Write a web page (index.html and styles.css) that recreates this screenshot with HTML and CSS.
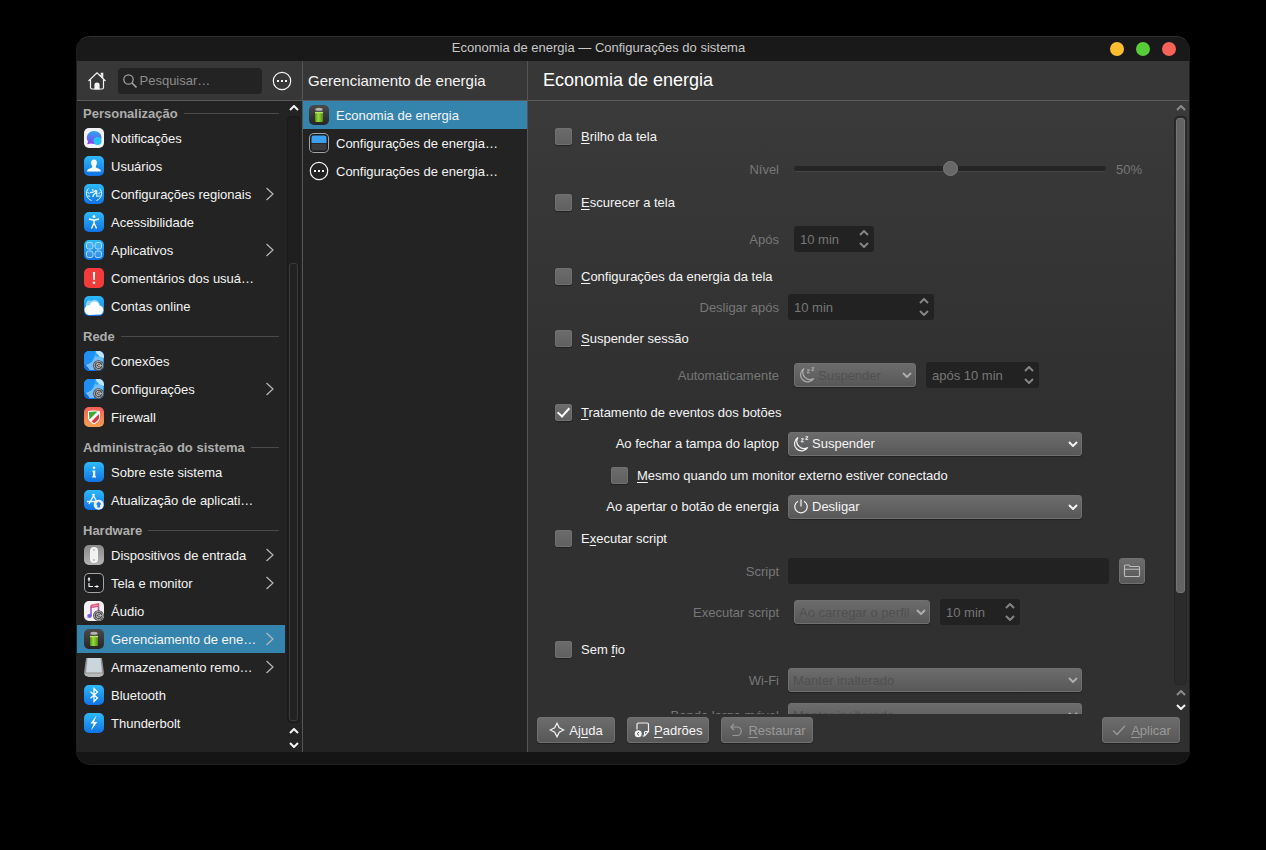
FILE: index.html
```html
<!DOCTYPE html>
<html lang="pt-BR">
<head>
  <meta charset="UTF-8">
  <meta name="viewport" content="width=device-width, initial-scale=1.0">
  <title>Economia de energia — Configurações do sistema</title>
  <link rel="stylesheet" href="styles.css">
</head>
<body>
  <svg class="defs" width="0" height="0">
    <defs>
      <linearGradient id="chat" x1="0" y1="0" x2="0" y2="1"><stop offset="0" stop-color="#2ba6f5"/><stop offset="1" stop-color="#8a3cf0"/></linearGradient>
      <linearGradient id="note" x1="0" y1="0" x2="0" y2="1"><stop offset="0" stop-color="#f0566c"/><stop offset="1" stop-color="#6e58ee"/></linearGradient>
      <linearGradient id="cell" x1="0" y1="0" x2="1" y2="0"><stop offset="0" stop-color="#4e8d14"/><stop offset=".4" stop-color="#9bdc3c"/><stop offset="1" stop-color="#4f8f16"/></linearGradient>
    </defs>
    <symbol id="chevron" viewBox="0 0 10 16"><path d="M1.500 2 8 8l-6.500 6" fill="none" stroke="currentColor" stroke-width="1.200"/></symbol>
    <symbol id="up" viewBox="0 0 10 6"><path d="M1 5l4-4 4 4" fill="none" stroke="currentColor" stroke-width="2"/></symbol>
    <symbol id="down" viewBox="0 0 10 6"><path d="M1 1l4 4 4-4" fill="none" stroke="currentColor" stroke-width="2"/></symbol>
    <symbol id="more" viewBox="0 0 20 20">
      <circle cx="10" cy="10" r="8.700" fill="none" stroke="currentColor" stroke-width="1.200"/>
      <path d="M5 9h2v2H5zM9 9h2v2H9zM13 9h2v2h-2z" fill="currentColor"/>
    </symbol>
    <symbol id="gear" viewBox="0 0 12 12">
      <circle cx="6" cy="6" r="5.800" fill="#444"/>
      <circle cx="6" cy="6" r="4.500" fill="none" stroke="#c4c4c4" stroke-width=".9"/>
      <circle cx="6" cy="6" r="2.300" fill="none" stroke="#d0d0d0" stroke-width=".9"/>
      <path d="M6 6h4M6 6 4 2.500M6 6 4 9.500" stroke="#ccc" stroke-width=".8"/>
    </symbol>
    <symbol id="battery" viewBox="0 0 20 20">
      <path d="M6 5h8v11a1 1 0 0 1-1 1H7a1 1 0 0 1-1-1z" fill="url(#cell)"/>
      <path d="M6 4.500c0-2.500 8-2.500 8 0v3H6z" fill="#50524c"/>
      <ellipse cx="10" cy="4.200" rx="3.600" ry="1.500" fill="#b4b5b0"/>
      <path d="M6 7h8v1.300H6z" fill="#b8e86a"/>
    </symbol>
    <symbol id="globe" viewBox="0 0 20 20">
      <path d="M0 13C6 13 9 8 10 4c1 0 2-2 1-4H5a5 5 0 0 0-5 5z" fill="#1f8ff5"/>
      <path d="M1 14c6-1 9-5 10-9l3 1 2-4 3 2v7l-5 2-4 6H4z" fill="#76bdfb"/>
      <path d="M12 0c0 3 2 3 3 5l5 2V5a5 5 0 0 0-5-5z" fill="#c2e2ff"/>
      <path d="M0 13c3 2 5 4 6 7H5a5 5 0 0 1-5-5z" fill="#136de0"/>
      <use href="#gear" x="9" y="9" width="11" height="11"/>
    </symbol>
    <symbol id="sleep" viewBox="0 0 16 16">
      <path d="M5 1.500A7.200 7.200 0 1 0 14.800 11.500 7.200 7.200 0 0 1 5 1.500z" fill="none" stroke="currentColor" stroke-width="1.200"/>
      <path d="M8 2.800h2.500L8 5.800h2.700M12.500 .8H15l-2.500 2.500h2.700" fill="none" stroke="currentColor" stroke-width="1"/>
    </symbol>
  </svg>

  <div class="window">
    <header class="titlebar">
      <h1>Economia de energia — Configurações do sistema</h1>
      <div class="window-buttons">
        <button class="minimize" aria-label="Minimizar"></button>
        <button class="maximize" aria-label="Maximizar"></button>
        <button class="close" aria-label="Fechar"></button>
      </div>
    </header>

    <div class="content">
      <aside class="sidebar">
        <div class="toolbar">
          <button class="tool" aria-label="Início">
            <svg viewBox="0 0 20 20" width="20" height="20" fill="none" stroke="currentColor" stroke-width="1.200"><path d="M1.500 10 10 1.800 18.500 10M3.500 8.500v8a1.500 1.500 0 0 0 1.500 1.500h10a1.500 1.500 0 0 0 1.500-1.500v-8M14.300 5.500V2.300h1.400V7"/><path d="M8 18v-4.500c0-2 4-2 4 0V18z" fill="currentColor"/></svg>
          </button>
          <label class="search">
            <svg viewBox="0 0 14 14" width="14" height="14" fill="none" stroke="currentColor" stroke-width="1.200"><circle cx="5.500" cy="5.500" r="4.700"/><path d="m9 9 4.500 4.500" stroke-width="1.600"/></svg>
            <input type="text" placeholder="Pesquisar…" aria-label="Pesquisar">
          </label>
          <button class="tool" aria-label="Mais"><svg width="20" height="20"><use href="#more"/></svg></button>
        </div>

        <div class="scroll">
          <nav class="list">
            <h2>Personalização</h2>
            <a href="#"><svg class="icon white" viewBox="0 0 20 20"><path d="M10 3c4.800 0 7.500 3 7.500 6.500s-2.700 6.500-7.500 6.500c-1 0-2-.2-3-.5L3.200 16.300l.8-2.800C1 9 4 3 10 3z" fill="url(#chat)"/><circle cx="13.500" cy="13" r="4" fill="#22c4f4"/></svg>Notificações</a>
            <a href="#"><svg class="icon blue" viewBox="0 0 20 20" fill="#fff"><path d="M10 3.500c3.500 0 3.500 4.500 1.800 6.500v1.500c2 1 4.700 1 5.200 4H3c.5-3 3.200-3 5.200-4V10C6.500 8 6.500 3.500 10 3.500z"/></svg>Usuários</a>
            <a href="#"><svg class="icon blue" viewBox="0 0 20 20" fill="none" stroke="#e6f6ff" stroke-width="1"><path d="M4.500 4.500C1 8 2 14.500 7.500 16.500M15.500 4.500c3.500 3.500 2.500 10-3 12M3.500 8.500l2 1M3.500 12l2.500.2M16.500 8.500l-2 1M16.500 12l-2.500.2"/><path d="M6 8.500c1.500-.5 2 .5 3.500-.5l2-1.500.8 2L10 10.500 8.500 13M12.500 6l.5 7M8 6.500l1.500-1" stroke-width="1.300"/></svg>Configurações regionais<svg class="chevron"><use href="#chevron"/></svg></a>
            <a href="#"><svg class="icon blue" viewBox="0 0 20 20" fill="none" stroke="#fff" stroke-width="1.400"><circle cx="10" cy="4.700" r="1.400" fill="#fff" stroke="none"/><path d="m5 7 4 1h2l4-1M10 8v4M10 11l-2.500 5.500M10 11l2.500 5.500"/></svg>Acessibilidade</a>
            <a href="#"><svg class="icon blue" viewBox="0 0 20 20" fill="#ffffff22" stroke="#b9e2ff" stroke-width=".9"><rect x="2.500" y="2.500" width="6.500" height="6.500" rx="2"/><rect x="11" y="2.500" width="6.500" height="6.500" rx="2"/><rect x="2.500" y="11" width="6.500" height="6.500" rx="2"/><rect x="11" y="11" width="6.500" height="6.500" rx="2"/></svg>Aplicativos<svg class="chevron"><use href="#chevron"/></svg></a>
            <a href="#"><svg class="icon red" viewBox="0 0 20 20" fill="#fff"><path d="M8.900 4h2.200l-.3 8H9.200z"/><circle cx="10" cy="14.700" r="1.300"/></svg>Comentários dos usuá…</a>
            <a href="#"><svg class="icon blue" viewBox="0 0 20 20"><path d="M2 12C1 6 4 3.500 7 5c5-3 8 0 9 4z" fill="#8ad3fa"/><path d="M5 19a5 5 0 0 1-3-8.500c1-1 2-1.500 3.500-1C7 4 14 4 15.500 9.500c4 0 5.500 6 1.500 9z" fill="#fff"/></svg>Contas online</a>

            <h2>Rede</h2>
            <a href="#"><svg class="icon blue" viewBox="0 0 20 20"><use href="#globe"/></svg>Conexões</a>
            <a href="#"><svg class="icon blue" viewBox="0 0 20 20"><use href="#globe"/></svg>Configurações<svg class="chevron"><use href="#chevron"/></svg></a>
            <a href="#"><svg class="icon orange" viewBox="0 0 20 20"><path d="M4 4q6-1 12 0v6c0 3.500-3 6-6 7.300C7 16 4 13.500 4 10z" fill="#fff"/><path d="M5 5q4-.7 8.500-.4L5.500 12.500C5 10 5 7 5 5z" fill="#3fa63b"/><path d="M15 7v3c0 2.700-2.700 5-5 6.200L7.500 14.500z" fill="#d8343f"/></svg>Firewall</a>

            <h2>Administração do sistema</h2>
            <a href="#"><svg class="icon blue" viewBox="0 0 20 20" fill="#fff"><circle cx="10" cy="5.700" r="1.300"/><path d="M8.500 8.500h2.700v5.700h.8v1.200H8.200v-1.200H9V9.700h-.5z"/></svg>Sobre este sistema</a>
            <a href="#"><svg class="icon blue" viewBox="0 0 20 20" fill="none" stroke="#e8f4ff" stroke-width="1.500"><path d="M10.500 4 5 14M8.500 4l4.500 8M3 11.500h9"/><circle cx="14.700" cy="14.700" r="5" fill="#eef4fb" stroke="none"/><path d="m14.700 11.500 3 3h-1.600v3h-2.800v-3h-1.600z" fill="#1a82ea" stroke="none"/></svg>Atualização de aplicati…</a>

            <h2>Hardware</h2>
            <a href="#"><svg class="icon gray" viewBox="0 0 20 20"><rect x="6" y="2" width="8" height="16" rx="4" fill="#f2f2f2"/><path d="M10 4v2M10 14v2" stroke="#999"/></svg>Dispositivos de entrada<svg class="chevron"><use href="#chevron"/></svg></a>
            <a href="#"><svg class="icon dark" viewBox="0 0 20 20" fill="none" stroke="#fff" stroke-width="1.100"><path d="M5 5.500v3M5 10v3.500h4M10.500 13.500h3"/><path d="m3.500 6.500 1.500-2.500 1.500 2.500zM12.500 12l2.500 1.500-2.500 1.500z" fill="#fff" stroke="none"/></svg>Tela e monitor<svg class="chevron"><use href="#chevron"/></svg></a>
            <a href="#"><svg class="icon white" viewBox="0 0 20 20"><path d="M7 4.500 14.500 3v10.500M7 4.500V15M7 6.500l7.500-1.500" fill="none" stroke="url(#note)" stroke-width="1.600"/><ellipse cx="5.500" cy="15" rx="2.300" ry="1.900" fill="#7b58e8"/><use href="#gear" x="9" y="9" width="11" height="11"/></svg>Áudio</a>
            <a href="#" class="selected"><svg class="icon charcoal"><use href="#battery"/></svg>Gerenciamento de ene…<svg class="chevron"><use href="#chevron"/></svg></a>
            <a href="#"><svg class="icon" viewBox="0 0 20 20"><path d="M2 1h16l2 15v3H0v-3z" fill="#8e9093"/><path d="M3.500 1h13L18 15.500H2z" fill="#cbd5dc"/><path d="M0 16.500h20V20H0z" fill="#b9bbb8"/></svg>Armazenamento remo…<svg class="chevron"><use href="#chevron"/></svg></a>
            <a href="#"><svg class="icon blue" viewBox="0 0 20 20" fill="none" stroke="#fff" stroke-width="1.300"><path d="m6.500 6.800 7 6.200-3.500 3.500v-13L13.500 7l-7 6.200"/></svg>Bluetooth</a>
            <a href="#"><svg class="icon blue" viewBox="0 0 20 20" fill="#fff"><path d="m12.500 2.500-6 8h3.200L7 17.500l6.300-8.500h-3.200z"/></svg>Thunderbolt</a>
          </nav>
          <div class="scrollbar idle">
            <svg class="arrow"><use href="#up"/></svg>
            <div class="groove"><div class="handle"></div></div>
            <svg class="arrow"><use href="#up"/></svg>
            <svg class="arrow"><use href="#down"/></svg>
          </div>
        </div>
      </aside>

      <section class="modules">
        <div class="toolbar"><h2>Gerenciamento de energia</h2></div>
        <nav class="list">
          <a href="#" class="selected"><svg class="icon charcoal"><use href="#battery"/></svg>Economia de energia</a>
          <a href="#"><svg class="icon dark" viewBox="0 0 20 20"><path d="M2.500 10V4.500a2 2 0 0 1 2-2h11a2 2 0 0 1 2 2V10z" fill="#3ba0f0"/><path d="M2.500 10.500h15V16a1.500 1.500 0 0 1-1.500 1.500H4A1.500 1.500 0 0 1 2.500 16z" fill="#3a3b3d"/></svg>Configurações de energia…</a>
          <a href="#"><svg class="icon"><use href="#more"/></svg>Configurações de energia…</a>
        </nav>
      </section>

      <main class="panel">
        <div class="toolbar"><h2>Economia de energia</h2></div>
        <div class="scroll">
          <form class="settings">
            <label class="group"><input type="checkbox"><span><u>B</u>rilho da tela</span></label>
            <div class="row disabled">
              <label for="level">Nível</label>
              <div class="field inset"><input type="range" id="level" value="50" disabled><output for="level">50%</output></div>
            </div>

            <label class="group"><input type="checkbox"><span><u>E</u>scurecer a tela</span></label>
            <div class="row tall disabled">
              <label for="dim">Após</label>
              <div class="field inset">
                <span class="spin"><input type="text" id="dim" value="10 min" disabled><span class="steps"><svg><use href="#up"/></svg><svg><use href="#down"/></svg></span></span>
              </div>
            </div>

            <label class="group"><input type="checkbox"><span><u>C</u>onfigurações da energia da tela</span></label>
            <div class="row short disabled">
              <label for="off">Desligar após</label>
              <div class="field">
                <span class="spin wide"><input type="text" id="off" value="10 min" disabled><span class="steps"><svg><use href="#up"/></svg><svg><use href="#down"/></svg></span></span>
              </div>
            </div>

            <label class="group"><input type="checkbox"><span><u>S</u>uspender sessão</span></label>
            <div class="row tall disabled">
              <label for="auto">Automaticamente</label>
              <div class="field inset">
                <span class="combo small with-icon"><svg class="glyph"><use href="#sleep"/></svg><select id="auto" disabled><option>Suspender</option></select><svg class="caret"><use href="#down"/></svg></span>
                <span class="spin medium"><input type="text" value="após 10 min" aria-label="Tempo" disabled><span class="steps"><svg><use href="#up"/></svg><svg><use href="#down"/></svg></span></span>
              </div>
            </div>

            <label class="group"><input type="checkbox" checked><span><u>T</u>ratamento de eventos dos botões</span></label>
            <div class="row short">
              <label for="lid">Ao fechar a tampa do laptop</label>
              <div class="field">
                <span class="combo with-icon"><svg class="glyph"><use href="#sleep"/></svg><select id="lid"><option>Suspender</option></select><svg class="caret"><use href="#down"/></svg></span>
              </div>
            </div>
            <label class="group nested"><input type="checkbox"><span><u>M</u>esmo quando um monitor externo estiver conectado</span></label>
            <div class="row short">
              <label for="power">Ao apertar o botão de energia</label>
              <div class="field">
                <span class="combo with-icon"><svg class="glyph" viewBox="0 0 16 16" fill="none" stroke="currentColor" stroke-width="1.200"><path d="M5 2.200a6.200 6.200 0 1 0 6 0M8 .5v7"/></svg><select id="power"><option>Desligar</option></select><svg class="caret"><use href="#down"/></svg></span>
              </div>
            </div>

            <label class="group"><input type="checkbox"><span>E<u>x</u>ecutar script</span></label>
            <div class="row disabled">
              <label for="script">Script</label>
              <div class="field">
                <input type="text" id="script" class="path" disabled>
                <button type="button" class="browse" aria-label="Abrir arquivo" disabled><svg viewBox="0 0 18 16" width="18" height="16" fill="none" stroke="currentColor" stroke-width="1.100"><path d="M1.500 3a1 1 0 0 1 1-1h3.500l1 1.500h8.500a1 1 0 0 1 1 1v8a1 1 0 0 1-1 1h-13a1 1 0 0 1-1-1zM1.500 6.200h15"/></svg></button>
              </div>
            </div>
            <div class="row last disabled">
              <label for="when">Executar script</label>
              <div class="field inset">
                <span class="combo event"><select id="when" disabled><option>Ao carregar o perfil</option></select><svg class="caret"><use href="#down"/></svg></span>
                <span class="spin"><input type="text" value="10 min" aria-label="Tempo" disabled><span class="steps"><svg><use href="#up"/></svg><svg><use href="#down"/></svg></span></span>
              </div>
            </div>

            <label class="group"><input type="checkbox"><span>Sem <u>f</u>io</span></label>
            <div class="row short disabled">
              <label for="wifi">Wi-Fi</label>
              <div class="field"><span class="combo"><select id="wifi" disabled><option>Manter inalterado</option></select><svg class="caret"><use href="#down"/></svg></span></div>
            </div>
            <div class="row dense disabled">
              <label for="mobile">Banda larga móvel</label>
              <div class="field"><span class="combo"><select id="mobile" disabled><option>Manter inalterado</option></select><svg class="caret"><use href="#down"/></svg></span></div>
            </div>
          </form>
          <div class="scrollbar">
            <svg class="arrow dim"><use href="#up"/></svg>
            <div class="groove"><div class="handle"></div></div>
            <svg class="arrow dim"><use href="#up"/></svg>
            <svg class="arrow"><use href="#down"/></svg>
          </div>
        </div>
        <footer class="actions">
          <button><svg viewBox="0 0 16 16" fill="none" stroke="currentColor" stroke-width="1.200"><path d="M8 1.200 10.300 5.700 14.800 8l-4.500 2.300L8 14.800l-2.300-4.500L1.200 8l4.500-2.300z"/></svg><span>Aj<u>u</u>da</span></button>
          <button><svg viewBox="0 0 16 16" fill="none" stroke="currentColor" stroke-width="1.200"><path d="M3 7.500V2.500A1.500 1.500 0 0 1 4.500 1h8.500A1.500 1.500 0 0 1 14.500 2.500v7L10.500 14H8.500M14.500 9.500h-3a1 1 0 0 0-1 1V14"/><circle cx="4.200" cy="11.800" r="3.500" fill="currentColor" stroke="none"/><path d="m5 10-1.800 1.800L5 13.500" stroke="#555" stroke-width="1"/></svg><span><u>P</u>adrões</span></button>
          <button disabled><svg viewBox="0 0 16 16" fill="none" stroke="currentColor" stroke-width="1.200"><path d="M6 2 3 5l3 3M3 5h6a4.200 4.200 0 0 1 0 8.500H4.500"/></svg><span><u>R</u>estaurar</span></button>
          <button class="apply" disabled><svg viewBox="0 0 16 16" fill="none" stroke="currentColor" stroke-width="1.300"><path d="m2 8.500 4 4L14 3.800"/></svg><span><u>A</u>plicar</span></button>
        </footer>
      </main>
    </div>
  </div>
</body>
</html>
```
FILE: styles.css
```css
* {
  box-sizing: border-box;
}
body {
  margin: 0;
  padding: 36px 76px 85px;
  height: 100vh;
  display: flex;
  background: #000;
  color: #f4f4f4;
  font-family: "Liberation Sans", Arial, sans-serif;
  font-size: 13px;
  overflow: hidden;
}
.defs {
  position: absolute;
}
h1, h2 {
  margin: 0;
  font-weight: normal;
}
svg {
  flex: none;
}
button, input, select {
  margin: 0;
  font: inherit;
  color: inherit;
}
a {
  color: inherit;
  text-decoration: none;
}
u {
  text-underline-offset: 2px;
  text-decoration-thickness: 1px;
  text-decoration-skip-ink: none;
}

/* Window frame */
.window {
  flex: 1;
  display: flex;
  flex-direction: column;
  min-width: 0;
  padding-bottom: 12px;
  background: #151515;
  border: 1px solid #1e1e1e;
  border-top-color: #303030;
  border-radius: 14px;
  overflow: hidden;
}
.titlebar {
  display: flex;
  align-items: center;
  height: 24px;
  padding: 0 13px 0 10px;
  background: #191919;
  color: #c8c8c8;
}
.titlebar h1 {
  flex: 1;
  padding-bottom: 3px;
  text-align: center;
  font-size: 13px;
}
.window-buttons {
  display: flex;
  gap: 12px;
}
.window-buttons button {
  width: 14px;
  height: 14px;
  padding: 0;
  border: none;
  border-radius: 50%;
}
.minimize { background: #ffbd2e; }
.maximize { background: #58cc38; }
.close { background: #f4625a; }

.content {
  flex: 1;
  display: flex;
  min-height: 0;
  background: #232323;
}
.toolbar {
  flex: none;
  display: flex;
  align-items: center;
  height: 40px;
  background: #373737;
  border-bottom: 1px solid #5a5a5a;
}
.scroll {
  flex: 1;
  display: flex;
  min-height: 0;
}

/* Lists */
.sidebar {
  flex: none;
  width: 226px;
  display: flex;
  flex-direction: column;
  border-right: 1px solid #555;
}
.sidebar .toolbar {
  justify-content: space-between;
  padding: 0 10px;
}
.tool {
  display: flex;
  padding: 0;
  border: none;
  background: none;
}
.search {
  display: flex;
  align-items: center;
  gap: 3px;
  width: 144px;
  height: 26px;
  padding: 0 5px;
  background: #232323;
  border-radius: 4px;
  color: #a0a0a0;
}
.search input {
  flex: 1;
  min-width: 0;
  padding: 0;
  border: none;
  outline: none;
  background: none;
}
.search input::placeholder {
  color: #8c8c8c;
}
.list {
  flex: 1;
  min-width: 0;
  overflow: hidden;
}
.list h2 {
  display: flex;
  align-items: center;
  gap: 6px;
  height: 27px;
  padding: 5px 6px 0;
  font-size: 13px;
  font-weight: bold;
  color: #adadad;
}
.list h2:first-child {
  height: 23px;
  padding-top: 1px;
}
.list h2::after {
  content: '';
  flex: 1;
  height: 1px;
  background: #4a4a4a;
}
.list a {
  display: flex;
  align-items: center;
  height: 28px;
  padding: 0 10px 0 7px;
  white-space: nowrap;
}
.list a.selected {
  background: #3584ae;
}
.icon {
  width: 20px;
  height: 20px;
  margin-right: 7px;
  border-radius: 5px;
}
.blue { background: linear-gradient(#2db9fb, #1173e4); }
.red { background: #f23b3b; }
.orange { background: linear-gradient(#f4605a, #f6a04e); }
.white { background: #f4f2f7; }
.gray { background: linear-gradient(#8a8a8a, #b4b4b4); }
.dark { background: #1a1b1d; box-shadow: inset 0 0 0 1px #a5a5a5; }
.charcoal { background: linear-gradient(#4a4a4a, #262626); }
.chevron {
  width: 10px;
  height: 16px;
  margin-left: auto;
  color: #b8b8b8;
}
.modules {
  flex: none;
  width: 225px;
  display: flex;
  flex-direction: column;
  border-right: 1px solid #555;
}
.modules .toolbar {
  padding-left: 5px;
}
.modules .toolbar h2 {
  font-size: 15px;
}
.modules .list a {
  padding-left: 6px;
}

/* Scrollbars */
.scrollbar {
  flex: none;
  display: flex;
  flex-direction: column;
  align-items: center;
  gap: 8px;
  width: 17px;
  padding: 4px 0;
}
.arrow {
  width: 10px;
  height: 6px;
}
.arrow.dim {
  color: #8c8c8c;
}
.groove {
  flex: 1;
  width: 13px;
  margin: -3px 0;
  padding: 1px;
  border: 1px solid #262626;
  border-radius: 4px;
  background: #2b2b2b;
}
.handle {
  height: 84%;
  border: 1px solid #747474;
  border-radius: 3px;
  background: #636363;
}
.idle .groove {
  display: flex;
  align-items: flex-end;
  background: #1f1f1f;
  border-color: #191919;
}
.idle .handle {
  flex: 1;
  height: 76%;
  background: #222;
  border-color: #3a3a3a;
}

/* Settings panel */
.panel {
  flex: 1;
  min-width: 0;
  display: flex;
  flex-direction: column;
  background: linear-gradient(#3a3a3a 40px, #303030 340px);
}
.panel .toolbar {
  padding-left: 15px;
}
.panel .toolbar h2 {
  font-size: 18px;
  color: #fff;
}
.settings {
  flex: 1;
  min-width: 0;
  padding-top: 25px;
  overflow: hidden;
}
.group {
  display: flex;
  align-items: center;
  gap: 9px;
  width: max-content;
  height: 20px;
  margin-left: 27px;
}
.group.nested {
  margin-left: 83px;
}
input[type="checkbox"] {
  appearance: none;
  display: grid;
  place-items: center;
  width: 17px;
  height: 17px;
  border-radius: 3px;
  background: linear-gradient(#6c6c6c, #606060);
  box-shadow: 0 1px 1px #222, inset 0 0 0 1px #707070;
}
input[type="checkbox"]:checked::after {
  content: '';
  width: 5px;
  height: 10px;
  margin-top: -3px;
  border: solid #fff;
  border-width: 0 2px 2px 0;
  transform: rotate(42deg);
}
.row {
  display: grid;
  grid-template-columns: 251px 1fr;
  align-items: center;
  gap: 9px;
  height: 46px;
}
.row.tall { height: 54px; }
.row.short { height: 43px; }
.row.short.disabled { height: 42px; }
.row.last { height: 36px; margin-bottom: 9px; }
.row.dense { height: 28px; }
.row > label {
  text-align: right;
}
.disabled {
  color: #777;
}
.field {
  display: flex;
  align-items: center;
  gap: 10px;
}
.field.inset {
  padding-left: 6px;
}
.spin {
  display: flex;
  align-items: center;
  width: 80px;
  height: 26px;
  padding: 0 5px 0 6px;
  background: #222;
  border-radius: 3px;
}
.spin.wide { width: 146px; }
.spin.medium { width: 113px; }
.spin input {
  flex: 1;
  min-width: 0;
  padding: 0;
  border: none;
  background: none;
}
.steps {
  display: grid;
  gap: 6px;
  color: #858585;
}
.steps svg {
  width: 10px;
  height: 6px;
}
.combo {
  position: relative;
  display: flex;
  width: 294px;
}
.combo.small { width: 122px; }
.combo.event { width: 136px; }
select {
  appearance: none;
  width: 100%;
  height: 24px;
  padding: 0 20px 0 4px;
  border: 1px solid #707070;
  border-radius: 3px;
  background: linear-gradient(#6c6c6c, #585858);
  box-shadow: 0 1px 1px #222;
  opacity: 1;
}
select:disabled {
  color: #505050;
  opacity: 1;
}
.with-icon select {
  padding-left: 23px;
}
.glyph {
  position: absolute;
  left: 5px;
  top: 4px;
  width: 16px;
  height: 16px;
}
.caret {
  position: absolute;
  right: 4px;
  top: 9px;
  width: 10px;
  height: 6px;
}
.disabled .glyph, .disabled .caret {
  color: #acacac;
}
.path {
  width: 321px;
  height: 26px;
  border: none;
  border-radius: 3px;
  background: #222;
}
input[type="range"] {
  appearance: none;
  width: 312px;
  height: 16px;
  background: none;
}
input[type="range"]::-webkit-slider-runnable-track {
  height: 6px;
  border-radius: 3px;
  background: #252525;
  border-bottom: 1px solid #464646;
}
input[type="range"]::-webkit-slider-thumb {
  appearance: none;
  width: 15px;
  height: 15px;
  margin-top: -5px;
  border: 1px solid #7c7c7c;
  border-radius: 50%;
  background: #686868;
}
.browse, .actions button {
  display: flex;
  align-items: center;
  justify-content: center;
  gap: 4px;
  height: 26px;
  border: 1px solid #707070;
  border-radius: 3px;
  background: linear-gradient(#6c6c6c, #585858);
  box-shadow: 0 1px 1px #222;
}
.browse {
  width: 26px;
  padding: 0;
  color: #bcbcbc;
}
.actions {
  flex: none;
  display: flex;
  gap: 12px;
  height: 38px;
  padding: 3px 9px 0;
}
.actions svg {
  width: 16px;
  height: 16px;
}
.actions button {
  min-width: 78px;
  padding: 0 6px;
}
.actions button:disabled {
  color: #999;
}
.actions .apply {
  margin-left: auto;
}
```
